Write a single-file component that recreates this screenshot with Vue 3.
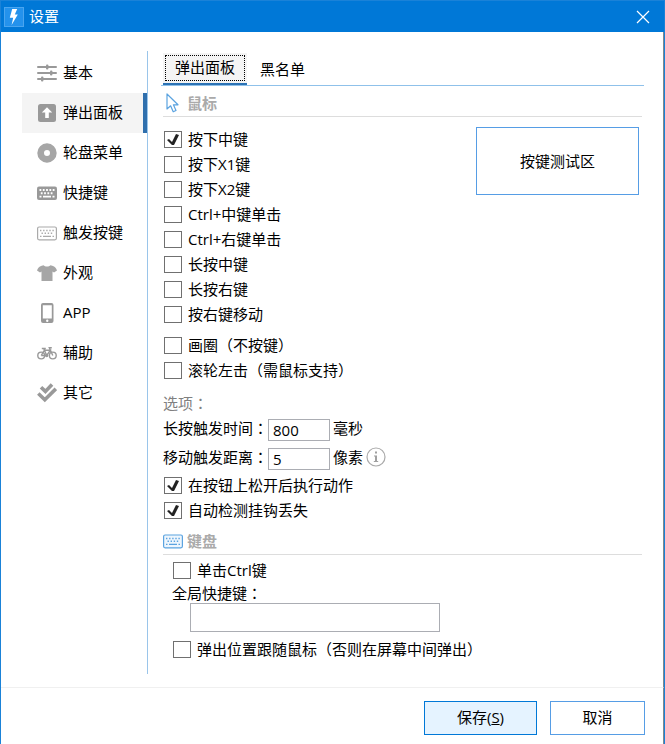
<script setup>
import { ref, reactive } from 'vue'

const navItems = ['基本', '弹出面板', '轮盘菜单', '快捷键', '触发按键', '外观', 'APP', '辅助', '其它']
const icons = ['sliders', 'panel', 'disc', 'keyboardSolid', 'keyboard', 'shirt', 'phone', 'bike', 'checks']
const activeNav = ref(1)

const tabs = ['弹出面板', '黑名单']
const activeTab = ref(0)

const mouseGroups = reactive([
  [
    { label: '按下中键', on: true },
    { label: '按下X1键', on: false },
    { label: '按下X2键', on: false },
    { label: 'Ctrl+中键单击', on: false },
    { label: 'Ctrl+右键单击', on: false },
    { label: '长按中键', on: false },
    { label: '长按右键', on: false },
    { label: '按右键移动', on: false },
  ],
  [
    { label: '画圈（不按键）', on: false },
    { label: '滚轮左击（需鼠标支持）', on: false },
  ],
])

const fields = reactive([
  { id: 'hold-time', label: '长按触发时间', value: '800', unit: '毫秒', info: false },
  { id: 'move-distance', label: '移动触发距离', value: '5', unit: '像素', info: true },
])

const options = reactive([
  { label: '在按钮上松开后执行动作', on: true },
  { label: '自动检测挂钩丢失', on: true },
])

const ctrlClick = ref(false)
const hotkey = ref('')
const followMouse = ref(false)
</script>

<template>
  <div class="window">
    <header class="titlebar">
      <span class="logo">
        <svg width="20" height="20" viewBox="0 0 20 20" aria-hidden="true">
          <path d="M8.2 2h5l-2.4 5.4h3L7.6 18l1.6-7.2H5.8z" fill="#fff" />
        </svg>
      </span>
      <h1 class="title">设置</h1>
      <button class="close" type="button" aria-label="关闭">
        <svg width="14" height="14" viewBox="0 0 14 14">
          <path d="M1 1l12 12M13 1L1 13" stroke="#fff" stroke-width="1.2" />
        </svg>
      </button>
    </header>

    <div class="body">
      <nav class="nav">
        <button
          v-for="(item, i) in navItems"
          :key="item"
          type="button"
          class="nav-item"
          :class="{ active: i === activeNav }"
          @click="activeNav = i"
        >
          <svg class="nav-icon" width="20" height="20" viewBox="0 0 20 20" aria-hidden="true">
            <g v-if="icons[i] === 'sliders'" fill="#999">
              <rect y="3" width="20" height="2" rx="1" /><rect y="9" width="20" height="2" rx="1" /><rect y="15" width="20" height="2" rx="1" />
              <rect x="9" y="1.5" width="2.4" height="5" rx="1" /><rect x="13" y="7.5" width="2.4" height="5" rx="1" /><rect x="4" y="13.5" width="2.4" height="5" rx="1" />
            </g>
            <g v-else-if="icons[i] === 'panel'">
              <rect x="1" y="1" width="18" height="18" rx="2.5" fill="#999" />
              <path d="M10 4.2l5.2 5.3h-3.4V15H8.2V9.5H4.8z" fill="#fff" />
            </g>
            <path
              v-else-if="icons[i] === 'disc'"
              fill="#a6a6a6" fill-rule="evenodd"
              d="M10 .3a9.7 9.7 0 1 0 0 19.4A9.7 9.7 0 0 0 10 .3zM10 7a3 3 0 1 1 0 6 3 3 0 0 1 0-6z"
            />
            <g v-else-if="icons[i] === 'keyboardSolid'">
              <rect y="3.5" width="20" height="13.5" rx="2" fill="#999" />
              <path d="M2.5 7h15" stroke="#fff" stroke-width="2" stroke-dasharray="1.8 1.5" />
              <path d="M3.8 10.3h13" stroke="#fff" stroke-width="2" stroke-dasharray="1.8 1.5" />
              <path d="M2.5 13.7h2M6 13.7h8M15.5 13.7h2" stroke="#fff" stroke-width="1.8" />
            </g>
            <g v-else-if="icons[i] === 'keyboard'" fill="none" stroke="#aaa">
              <rect x=".6" y="4" width="18.8" height="12.8" rx="1.5" stroke-width="1.2" />
              <path d="M3 7.5h14.5" stroke-width="1.4" stroke-dasharray="1.4 1.7" />
              <path d="M4.5 10.3h12" stroke-width="1.4" stroke-dasharray="1.4 1.7" />
              <path d="M3 13.4h1.5M6 13.4h8M15.5 13.4H17" stroke-width="1.4" />
            </g>
            <path
              v-else-if="icons[i] === 'shirt'"
              fill="#a6a6a6"
              d="M6.5 2.2c1.5 1.8 5.5 1.8 7 0L16 3c2.2.8 3.2 2.3 4 4.5l-3 2-1.5-1V18h-11V8.5L3 9.5l-3-2C.8 5.3 1.8 3.8 4 3z"
            />
            <path
              v-else-if="icons[i] === 'phone'"
              fill="#999" fill-rule="evenodd"
              d="M6 0h8.5a2 2 0 0 1 2 2v16a2 2 0 0 1-2 2H6a2 2 0 0 1-2-2V2a2 2 0 0 1 2-2zm-.2 2.3v13.2h9V2.3zM10.25 16.6a1.2 1.2 0 1 0 0 2.4 1.2 1.2 0 0 0 0-2.4z"
            />
            <g v-else-if="icons[i] === 'bike'" fill="none" stroke="#999" stroke-width="1.4">
              <circle cx="4.2" cy="12.5" r="3.4" /><circle cx="15.8" cy="12.5" r="3.4" />
              <path d="M4.2 12.5l3.2-5.3h6L9.7 12.5H4.2M9.7 12.5L6.7 5.5M4.8 5.5h4M15.8 12.5l-3.5-7.8h2.5" />
              <circle cx="9.7" cy="12.5" r="1" />
            </g>
            <g v-else fill="none" stroke="#999" stroke-width="3.6">
              <path d="M4 4.2l4.4 4.2L15 1.6" /><path d="M1.3 10.5l6.5 6.2L18.8 5.8" />
            </g>
          </svg>
          <span class="text">{{ item }}</span>
        </button>
      </nav>

      <main class="panel">
        <div class="tabs" role="tablist">
          <button
            v-for="(tab, i) in tabs"
            :key="tab"
            type="button"
            role="tab"
            class="tab"
            :class="{ active: i === activeTab }"
            :aria-selected="i === activeTab"
            @click="activeTab = i"
          >
            <span class="tab-text">{{ tab }}</span>
          </button>
        </div>

        <section class="section">
          <h2 class="heading">
            <svg width="20" height="20" viewBox="0 0 20 20" aria-hidden="true">
              <path d="M4 1v15l3.6-3.2 2.6 6 2.8-1.3-2.6-5.7H15z" fill="#fff" stroke="#5ba3e0" stroke-width="1.2" stroke-linejoin="round" />
            </svg>
            鼠标
          </h2>
          <div class="mouse">
            <div class="groups">
              <div v-for="(group, g) in mouseGroups" :key="g" class="group">
                <label v-for="opt in group" :key="opt.label" class="check">
                  <input v-model="opt.on" type="checkbox" />
                  <span class="text">{{ opt.label }}</span>
                </label>
              </div>
            </div>
            <button class="test-area" type="button">按键测试区</button>
          </div>

          <h3 class="subheading">选项<span class="colon">：</span></h3>
          <div v-for="f in fields" :key="f.id" class="field">
            <label class="text" :for="f.id">{{ f.label }}<span class="colon">：</span></label>
            <input :id="f.id" v-model="f.value" class="number" type="text" />
            <span class="text unit">{{ f.unit }}</span>
            <svg v-if="f.info" class="info" width="20" height="20" viewBox="0 0 20 20" aria-hidden="true">
              <circle cx="10" cy="10" r="9" fill="none" stroke="#aaa" stroke-width="1.2" />
              <path d="M9 4.5h2v2H9zM8 8.5h3v5.5h1.2v1H7.8v-1H9V9.5H8z" fill="#a0a0a0" />
            </svg>
          </div>
          <label v-for="opt in options" :key="opt.label" class="check">
            <input v-model="opt.on" type="checkbox" />
            <span class="text">{{ opt.label }}</span>
          </label>
        </section>

        <section class="section keyboard">
          <h2 class="heading">
            <svg width="20" height="20" viewBox="0 0 20 20" aria-hidden="true" fill="none" stroke="#5ba3e0">
              <rect x=".6" y="4" width="18.8" height="12.8" rx="1.5" stroke-width="1.2" fill="#eef6fd" />
              <path d="M3 7.5h14.5" stroke-width="1.4" stroke-dasharray="1.4 1.7" />
              <path d="M4.5 10.3h12" stroke-width="1.4" stroke-dasharray="1.4 1.7" />
              <path d="M3 13.4h1.5M6 13.4h8M15.5 13.4H17" stroke-width="1.4" />
            </svg>
            键盘
          </h2>
          <div class="keyboard-body">
            <label class="check">
              <input v-model="ctrlClick" type="checkbox" />
              <span class="text">单击Ctrl键</span>
            </label>
            <label class="hotkey-label" for="hotkey">全局快捷键<span class="colon">：</span></label>
            <input id="hotkey" v-model="hotkey" class="hotkey" type="text" />
            <label class="check">
              <input v-model="followMouse" type="checkbox" />
              <span class="text">弹出位置跟随鼠标（否则在屏幕中间弹出）</span>
            </label>
          </div>
        </section>
      </main>
    </div>

    <footer class="footer">
      <button type="button" class="btn save">保存(<u>S</u>)</button>
      <button type="button" class="btn cancel">取消</button>
    </footer>
  </div>
</template>

<style>
body {
  margin: 0;
}
</style>

<style scoped>
.window,
.window * {
  box-sizing: border-box;
}
.window {
  display: flex;
  flex-direction: column;
  min-height: 100vh;
  border: 1px solid #1a82d8;
  border-bottom: 0;
  background: #fff;
  color: #000;
  font: 380 15px/20px 'Open Sans', 'Noto Sans CJK SC', sans-serif;
}
button,
input {
  font: inherit;
  color: inherit;
}
button {
  padding: 0;
  border: 0;
  background: none;
}
h1,
h2,
h3 {
  margin: 0;
  font: inherit;
}
.text {
  padding-bottom: 2px;
}
.colon {
  font-family: 'Noto Sans CJK TC', sans-serif;
}
.titlebar {
  display: flex;
  align-items: center;
  height: 31px;
  padding: 0 3px;
  background: #0078d7;
  color: #fff;
}
.logo {
  display: flex;
  background: #2492ec;
  outline: 1px solid #4aa5ef;
  outline-offset: -1px;
}
.title {
  flex: 1;
  padding: 0 0 2px 5px;
}
.close {
  display: flex;
  padding: 6px 11px;
}
.body {
  display: flex;
  flex: 1;
  padding: 19px 19px 13px 21px;
  border-right: 1px solid #7d8790;
}
.nav {
  flex: 0 0 126px;
  padding-top: 2px;
  border-right: 1px solid #9ac5ea;
}
.nav-item {
  display: flex;
  align-items: center;
  gap: 6px;
  width: 100%;
  height: 40px;
  padding-left: 15px;
  border-right: 4px solid transparent;
  text-align: left;
}
.nav-item.active {
  background: #f4f4f4;
  border-right-color: #2f6fad;
}
.nav-icon {
  flex: none;
}
.panel {
  flex: 1;
  min-width: 0;
  padding-left: 13px;
}
.tabs {
  display: flex;
  align-items: flex-end;
  height: 35px;
  padding-left: 2px;
  border-bottom: 1px solid #8fc1ea;
}
.tab {
  height: 30px;
  padding: 0 13px 2px;
}
.tab.active {
  height: 32px;
  padding: 2px;
  border-bottom: 2px solid #2c73b5;
  background: #f4f4f4;
}
.tab.active .tab-text {
  display: block;
  padding: 1px 9px 3px;
  border: 1px dotted #000;
}
.section {
  padding: 4px 2px 0;
}
.heading {
  display: flex;
  align-items: center;
  gap: 4px;
  height: 27px;
  border-bottom: 1px solid #ddd;
  color: #aaa;
  font-weight: bold;
}
.mouse {
  display: flex;
  justify-content: space-between;
  align-items: flex-start;
  padding: 10px 3px 0 0;
}
.group + .group {
  margin-top: 6px;
}
.check {
  display: flex;
  align-items: center;
  gap: 6px;
  height: 25px;
  padding-left: 1px;
}
.check input {
  flex: none;
  appearance: none;
  width: 18px;
  height: 17px;
  margin: 0;
  border: 1px solid #707070;
  background: #fff;
}
.check input:checked::before {
  content: '';
  display: block;
  width: 16px;
  height: 15px;
  background: #222;
  clip-path: polygon(2px 8px, 4px 7px, 7px 10px, 11px 2px, 14px 3px, 9px 13px, 7px 13px);
}
.test-area {
  flex: 0 1 163px;
  height: 68px;
  border: 1px solid #569de5;
}
.subheading {
  padding: 10px 0 2px;
  color: #808080;
}
.field {
  display: flex;
  align-items: center;
  height: 29px;
}
.number {
  width: 62px;
  height: 22px;
  padding: 0 4px;
  border: 1px solid #abadb3;
}
.field .text {
  padding-bottom: 4px;
}
.unit {
  padding: 0 3px;
}
.info {
  margin-bottom: 3px;
}
.keyboard {
  padding-top: 5px;
}
.keyboard-body {
  padding: 3px 0 0 9px;
}
.hotkey-label {
  display: block;
}
.hotkey {
  display: block;
  width: 250px;
  height: 29px;
  margin: 0 0 5px 18px;
  padding: 0 4px;
  border: 1px solid #abadb3;
}
.footer {
  display: flex;
  justify-content: flex-end;
  gap: 13px;
  padding: 13px 18px 9px;
  border-top: 1px solid #f0f0f0;
  border-right: 1px solid #7d8790;
}
.btn {
  height: 34px;
  padding-bottom: 2px;
  border: 1px solid #569de5;
}
.save {
  width: 113px;
  border-color: #0078d7;
  background: #e5f3ff;
}
.cancel {
  width: 95px;
}
</style>
